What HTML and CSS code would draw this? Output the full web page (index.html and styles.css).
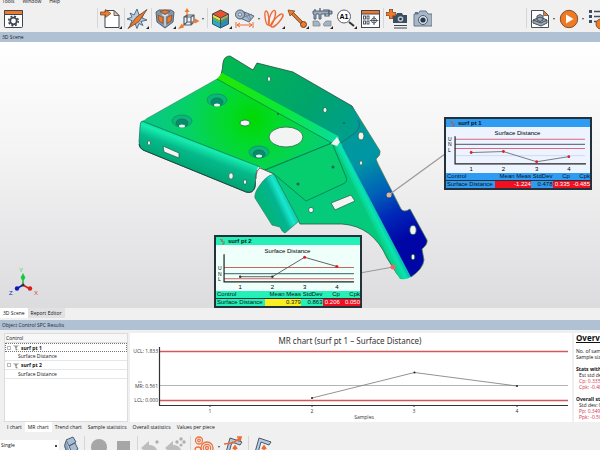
FILE: index.html
```html
<!DOCTYPE html>
<html lang="en">
  <head>
    <meta charset="UTF-8" />
    <meta name="viewport" content="width=device-width, initial-scale=1.0" />
    <title>Object Control SPC Results</title>
    <link rel="stylesheet" href="styles.css">
  </head>
  <body>
    <nav class="menu">
      <a href="#tools">Tools</a>
      <a href="#window">Window</a>
      <a href="#help">Help</a>
    </nav>

    <div class="toolbar">
      <button class="tool" aria-label="Options">
        <svg viewBox="0 0 22 22"><rect x="2.500" y="2.500" width="18" height="17" rx="1" fill="#fff" stroke="#3d4652"/><path d="M2.500 2.500h18v4h-18z" fill="#f07a2c" stroke="#3d4652"/><circle cx="11.500" cy="13" r="3.300" fill="none" stroke="#3d4652" stroke-width="1.800"/><circle cx="11.500" cy="13" r="4.800" fill="none" stroke="#3d4652" stroke-width="1.500" stroke-dasharray="2 1.770"/></svg>
      </button>
      <span class="sep first"></span>
      <button class="tool" aria-label="Import">
        <svg viewBox="0 0 22 22"><path d="M5 2.500h9l5 5v12H5z" fill="#fff" stroke="#3d4652"/><path d="M14 2.500v5h5z" fill="#f3c49c" stroke="#3d4652" stroke-width=".8"/><path d="M.5 4h5V1.500L11 5.500l-5.500 4V7h-5z" fill="#f07a2c" stroke="#66432c" stroke-width=".7"/><path d="M22 18v3h-3z" fill="#222"/></svg>
      </button>
      <span class="sep"></span>
      <button class="tool" aria-label="Align">
        <svg viewBox="0 0 22 22"><path d="M10 1l2 6 5-2-2 5 5 2-6 1.500 2 4-4-2-2 5-2-5-5 2 2-5-5-1.500 5-2-2-4 4 2z" fill="#b4cbe0" stroke="#456078" stroke-width=".9"/><path d="M20 1.500L12 13.500 1 20.500l8-11z" fill="#f07a2c" stroke="#6c4630" stroke-width=".8"/><path d="M22 18v3h-3z" fill="#222"/></svg>
      </button>
      <span class="sep"></span>
      <button class="tool" aria-label="Datum">
        <svg viewBox="0 0 22 22"><path d="M2 4l3-2h12l3 2-1 10-8 6-8-6z" fill="#8596a8" stroke="#536373"/><path d="M6 3.500l5-1.500 5 1.500-5 2.500zM4 7l5 2.500v6L5 13zM18 7l-5 2.500v6l4-2.500z" fill="#f07a2c" stroke="#754a30" stroke-width=".7"/><path d="M8 6.500l3 1.500 3-1.500M11 8v10" fill="none" stroke="#e4eaf0" stroke-width="1.200"/><path d="M22 18v3h-3z" fill="#222"/></svg>
      </button>
      <button class="tool" aria-label="Coordinate system">
        <svg viewBox="0 0 22 22"><path d="M6 9l3-2h7v7l-3 3H6zM6 9h7v8M13 9l3-2M6 17l3-3h7M9 7v7" fill="none" stroke="#53616f" stroke-width="1.200"/><path d="M9 7V3M14 14h4M6 17l-3 2" stroke="#f07a2c" stroke-width="1.300"/><path d="M6.500 4L9 0l2.500 4zM17 10.500l4.500 2.500-4.500 2.500zM4 15.500L0 21l6-1.500z" fill="#f07a2c"/></svg>
      </button>
      <span class="drop"></span>
      <span class="sep"></span>
      <button class="tool" aria-label="Color map">
        <svg viewBox="0 0 22 22"><path d="M2.500 6L10.500 2l8 4v10l-8 4-8-4z" fill="#31579f"/><path d="M2.500 6l8-4 8 4-8 4z" fill="#e9532c"/><path d="M2.500 6l8 4 8-4v3l-8 4-8-4z" fill="#f4d940"/><path d="M2.500 9l8 4 8-4v3l-8 4-8-4z" fill="#58b85a"/><path d="M2.500 12l8 4 8-4v4l-8 4-8-4z" fill="#28aad5"/><path d="M10.500 10l8-4v10l-8 4z" fill="#2855a0" opacity=".35"/><path d="M2.500 6l8-4 8 4v10l-8 4-8-4zM2.500 6l8 4 8-4M10.500 10v10" fill="none" stroke="#3d4652" stroke-width=".9"/><path d="M22 18v3h-3z" fill="#222"/></svg>
      </button>
      <button class="tool" aria-label="Dimensions">
        <svg viewBox="0 0 22 22"><path d="M8 3l12 5-5 6-9-4z" fill="#a6b8cc" stroke="#4c5c6e" stroke-width=".9"/><path d="M10 4l6 9M14 5.500l3 6M8 10l10-4" stroke="#62748a" stroke-width=".7"/><circle cx="6" cy="6.500" r="4.500" fill="#a9bacd" stroke="#4c5c6e"/><circle cx="6" cy="6.500" r="1.700" fill="#e8edf2" stroke="#4c5c6e" stroke-width=".8"/><path d="M2 14v6M19 14v6M3 17h15M6 15l-3 2 3 2M15 15l3 2-3 2" fill="none" stroke="#ef6b35"/></svg>
      </button>
      <span class="drop"></span>
      <button class="tool" aria-label="Cross sections">
        <svg viewBox="0 0 22 22"><g fill="none" stroke="#ed6a35" stroke-width="1.400"><ellipse cx="4" cy="10" rx="1.800" ry="7" transform="rotate(-8 4 10)"/><ellipse cx="9" cy="10" rx="2.500" ry="8" transform="rotate(18 9 10)"/><ellipse cx="14" cy="12.500" rx="2.500" ry="8.500" transform="rotate(42 14 12.500)"/></g><path d="M22 18v3h-3z" fill="#222"/></svg>
      </button>
      <button class="tool" aria-label="Distance">
        <svg viewBox="0 0 22 22"><path d="M4 4l13 13" stroke="#684228" stroke-width="3.200"/><path d="M4 4l13 13" stroke="#f07a2c" stroke-width="1.800"/><path d="M1 2l7 1-5 5z" fill="#f07a2c" stroke="#684228" stroke-width=".7"/><circle cx="16.500" cy="16.500" r="3" fill="#f07a2c" stroke="#684228"/><path d="M22 18v3h-3z" fill="#222"/></svg>
      </button>
      <button class="tool" aria-label="Caliper">
        <svg viewBox="0 0 22 22"><path d="M2 3h19v3H10v5H8V6H5v5H3V6H2z" fill="#9badbf" stroke="#475769" stroke-width=".9"/><path d="M4 1v2M9 0v3M12 2h6v6h-4V6" fill="none" stroke="#475769" stroke-width="1.200"/><path d="M2 13h5q3 3 2 5H2zM20 13h-5q-4 3-2 5h7z" fill="#a6b4c1" stroke="#75828e" stroke-width=".7"/><path d="M22 18v3h-3z" fill="#222"/></svg>
      </button>
      <button class="tool" aria-label="Annotation">
        <svg viewBox="0 0 22 22"><path d="M14 14l5 4" stroke="#333" stroke-width="2"/><circle cx="9" cy="8.500" r="6.500" fill="#fff" stroke="#5a6068"/><text x="4.500" y="11" class="icon-text">A1</text><path d="M22 18v3h-3z" fill="#222"/></svg>
      </button>
      <button class="tool" aria-label="Report table">
        <svg viewBox="0 0 22 22"><rect x="2.500" y="2.500" width="18" height="17" fill="#fff" stroke="#3d4652"/><path d="M2.500 2.500h18v3.500h-18z" fill="#f07a2c" stroke="#3d4652"/><g fill="none" stroke="#3d4652" stroke-width=".9"><rect x="4.500" y="8" width="2" height="3"/><rect x="8" y="8" width="2" height="3"/><rect x="4.500" y="13" width="2" height="3"/><rect x="8" y="13" width="2" height="3"/><circle cx="15" cy="12.500" r="2.500"/><path d="M15 8v9M10.800 12.500h8.500"/></g></svg>
      </button>
      <span class="sep"></span>
      <button class="tool" aria-label="Add snapshot">
        <svg viewBox="0 0 22 22"><path d="M7 7h3l1-2h5l1 2h4v8H7z" fill="#3d4d60"/><circle cx="14.500" cy="11" r="2.800" fill="#b9c8d6"/><circle cx="14.500" cy="11" r="1.300" fill="#26323e"/><path d="M8 17.500h13M8 20h13" stroke="#3d4652"/><path d="M5 1v10M0 6h10" stroke="#6c4630" stroke-width="4"/><path d="M5 1.500v9M.5 6h9" stroke="#f07a2c" stroke-width="2.800"/></svg>
      </button>
      <button class="tool" aria-label="Snapshot">
        <svg viewBox="0 0 22 22"><path d="M4 6h4l2-3h6l2 3h4v12H4z" fill="#a8b7c8" stroke="#66778a"/><circle cx="13" cy="12" r="4.500" fill="#dce4ec" stroke="#4a5b6e"/><circle cx="13" cy="12" r="2.600" fill="#26394e"/><path d="M5 5h3" stroke="#66778a" stroke-width="2"/></svg>
      </button>
      <span class="sep second"></span>
      <button class="tool" aria-label="Inspect part">
        <svg viewBox="0 0 22 22"><path d="M2.500 2.500h12l5 5v12h-17z" fill="#fff" stroke="#4a4f55"/><path d="M14.500 2.500l5 5h-5z" fill="#f07a2c" stroke="#4a4f55" stroke-width=".7"/><path d="M4 12l7-3 7 3v3l-6 3-8-3zM8 8l3-1.500L14 8v4l-3 1.500L8 12z" fill="#9aa8b6" stroke="#46515c"/><path d="M4 12l8 3 6-3" fill="none" stroke="#46515c"/></svg>
      </button>
      <span class="drop"></span>
      <button class="tool" aria-label="Play">
        <svg viewBox="0 0 22 22"><circle cx="11" cy="11" r="8.700" fill="#f07a22" stroke="#7d5132"/><path d="M8 6.500l7.500 4.500L8 15.500z" fill="#fff"/></svg>
      </button>
      <span class="drop"></span>
      <button class="tool" aria-label="Sequence">
        <svg viewBox="0 0 22 22"><path d="M2 3.500h3M2 8.500h3M2 13.500h3" stroke="#3d4d60" stroke-width="3"/><path d="M7 3.500h12M7 8.500h12M7 13.500h12" stroke="#3d4d60" stroke-width="1.500"/><circle cx="14" cy="16" r="5" fill="#f07a22" stroke="#7d5132"/></svg>
      </button>
    </div>

    <h2 class="pane-title">3D Scene</h2>

    <main class="scene">
      <svg class="model" viewBox="0 41 600 267" preserveAspectRatio="xMinYMin meet">
        <defs>
          <linearGradient id="flange" gradientUnits="userSpaceOnUse" x1="235" y1="60" x2="365" y2="150">
            <stop offset="0" stop-color="#02b853"/><stop offset=".55" stop-color="#00a46c"/><stop offset="1" stop-color="#009c9b"/>
          </linearGradient>
          <linearGradient id="bend" gradientUnits="userSpaceOnUse" x1="220" y1="75" x2="338" y2="140">
            <stop offset="0" stop-color="#24e800"/><stop offset=".5" stop-color="#0be835"/><stop offset="1" stop-color="#08dca0"/>
          </linearGradient>
          <radialGradient id="plate" gradientUnits="userSpaceOnUse" cx="252" cy="118" r="95">
            <stop offset="0" stop-color="#00d900"/><stop offset=".25" stop-color="#02da28"/><stop offset=".65" stop-color="#05d262"/><stop offset="1" stop-color="#08c981"/>
          </radialGradient>
          <linearGradient id="front" gradientUnits="userSpaceOnUse" x1="205" y1="140" x2="194" y2="170">
            <stop offset="0" stop-color="#06ce7c"/><stop offset=".2" stop-color="#16edb0"/><stop offset=".5" stop-color="#05b98a"/><stop offset="1" stop-color="#00a574"/>
          </linearGradient>
          <linearGradient id="arm" gradientUnits="userSpaceOnUse" x1="350" y1="125" x2="410" y2="235">
            <stop offset="0" stop-color="#009b96"/><stop offset=".3" stop-color="#0095a5"/><stop offset=".58" stop-color="#005fb8"/><stop offset=".78" stop-color="#0028b8"/><stop offset="1" stop-color="#0006a6"/>
          </linearGradient>
          <linearGradient id="armBend" gradientUnits="userSpaceOnUse" x1="361" y1="205" x2="377" y2="197">
            <stop offset="0" stop-color="#05ca7b"/><stop offset=".45" stop-color="#0be4b0"/><stop offset="1" stop-color="#0086b0"/>
          </linearGradient>
          <linearGradient id="foot" gradientUnits="userSpaceOnUse" x1="267" y1="208" x2="292" y2="196">
            <stop offset="0" stop-color="#02b57c"/><stop offset=".4" stop-color="#03b490"/><stop offset=".65" stop-color="#18e8cf"/><stop offset="1" stop-color="#03b98a"/>
          </linearGradient>
        </defs>

        <!-- back flange -->
        <path d="M218 79Q222 75 223 62Q224 55 230 55L253 69L257 62L293 71L352 105L364 130L344 150L336 143L218 82Z" fill="url(#flange)" stroke="#2a4a3c" stroke-width=".8"/>
        <path d="M216 79L222 72L338 135Q341 139 335 143L330 145Z" fill="url(#bend)"/>

        <!-- top plate -->
        <path d="M142 121Q143 119 146 118L217 78L332 142L300 205L260 166L142 122Z" fill="url(#plate)"/>
        <path d="M217 78L332 142L262 170" fill="none" stroke="#087747" stroke-width=".7"/>
        <path d="M146 118L217 78" stroke="#358062" stroke-width=".6"/>

        <!-- front flange -->
        <path d="M142 120L260 166Q256 169 256 176L255 186Q253 193 246 191L143 149Q139 147 139 141L140 126Q140 121 142 120Z" fill="url(#front)" stroke="#176d55" stroke-width=".7"/>
        <path d="M139 143Q139 147 143 149L246 191Q253 193 255 186L256 176Q256 168 260 167" fill="none" stroke="#23483c"/>

        <!-- lower face -->
        <path d="M273 172L332 142L342 150L406 272Q402 279 397 273L387 257Q373 225 342 223L300 223Z" fill="#05ca7b" stroke="#215c46" stroke-width=".8"/>
        <path d="M263 170L332 142L346 176Q348 181 343 183L306 200L274 173Z" fill="#06ce6f" stroke="#096b48" stroke-width=".7"/>
        <path d="M334 143L341 142L413 274Q409 279 400 278L396 272Z" fill="url(#armBend)"/>

        <!-- right arm -->
        <path d="M352 105L380 150Q381 154 376 158L378 163L401 208Q404 212 410 208L427 239Q428 243 422 248L424 259Q423 268 411 276L342 145L357 128Z" fill="url(#arm)"/>
        <path d="M352 105L380 150Q381 154 376 158L378 163L401 208Q404 212 410 208L427 239Q428 243 422 248L424 259Q423 268 411 276" fill="none" stroke="#4c7b53" stroke-width=".8"/>
        <path d="M341 142L355 132Q362 126 358 119" fill="none" stroke="#285d63" stroke-width=".7"/>

        <!-- left foot -->
        <path d="M255 197Q254 192 260 184Q267 174 274 173L299 220L285 232Q282 231 280 226L272 224Z" fill="url(#foot)" stroke="#207c62" stroke-width=".7"/>
        <path d="M258 166L274 173Q266 174 256 184Q255 172 258 166Z" fill="#f3f3f4"/>
        <path d="M260 167Q256 169 256 178M260 167L274 173" fill="none" stroke="#33453d" stroke-width=".8"/>
        <path d="M331 143L337 136L340 141L337 145Z" fill="#eef4f2"/>

        <!-- holes -->
        <g fill="#f2f3f3" stroke="#24684b" stroke-width=".8">
          <ellipse cx="286" cy="136" rx="17" ry="10"/>
          <ellipse cx="245" cy="122" rx="5" ry="3"/>
          <ellipse cx="269" cy="78" rx="1.600" ry="2.500"/>
          <ellipse cx="325" cy="109" rx="2" ry="2.500"/>
          <ellipse cx="361" cy="135" rx="3" ry="4"/>
          <ellipse cx="361" cy="162" rx="1.500" ry="2.200"/>
          <ellipse cx="149" cy="142" rx="1.600" ry="2.200"/>
          <ellipse cx="231" cy="175" rx="2.300" ry="3.200"/>
          <ellipse cx="245" cy="181" rx="1.700" ry="2.300"/>
          <ellipse cx="311" cy="209" rx="2.500" ry="2.700"/>
          <ellipse cx="413" cy="229" rx="3.200" ry="4.500"/>
          <ellipse cx="413" cy="256" rx="1.800" ry="2.800"/>
          <path d="M163 145L179 152L179 157L164 151Z"/>
          <path d="M331 202L351 194L355 200L335 209Z"/>
        </g>
        <g fill="#245f54">
          <circle cx="298" cy="183" r="1.500"/><circle cx="333" cy="166" r="1.500"/><circle cx="278" cy="113" r="1"/><circle cx="344" cy="122" r="1"/>
        </g>
        <g fill="#09b779" stroke="#17896f" stroke-width=".8">
          <ellipse cx="217" cy="99" rx="10" ry="6"/><ellipse cx="182" cy="120" rx="10" ry="6"/><ellipse cx="259" cy="151" rx="10" ry="6"/>
        </g>
        <g fill="#078e69" stroke="#0a7159" stroke-width=".7">
          <ellipse cx="217" cy="101" rx="6" ry="4"/><ellipse cx="182" cy="122" rx="6" ry="4"/><ellipse cx="259" cy="153" rx="6" ry="4"/>
        </g>
        <g fill="#eef3f1">
          <ellipse cx="217" cy="104" rx="3" ry="1.500"/><ellipse cx="182" cy="125" rx="3" ry="1.500"/><ellipse cx="259" cy="155" rx="3" ry="1.500"/>
        </g>

        <!-- leaders -->
        <path d="M390 193L445 153M360 272L393 266" stroke="#999" stroke-width="1.200"/>
        <circle cx="389" cy="194" r="2.500" fill="#e3b58c"/>
        <circle cx="393" cy="266" r="2.500" fill="#ed6868"/>
      </svg>

      <svg class="axes" viewBox="0 0 34 30">
        <path d="M15 17V7" stroke="#18b83a" stroke-width="1.500"/><path d="M15 17l-7 4" stroke="#1018b8" stroke-width="1.500"/><path d="M15 17l7 4" stroke="#d3201c" stroke-width="1.500"/>
        <path d="M12.500 10L15 5l2.500 5z" fill="#18c83a"/><circle cx="15" cy="10" r="2" fill="#18c83a"/><circle cx="9" cy="20.500" r="2.200" fill="#1018b8"/><circle cx="22" cy="20.500" r="2.200" fill="#d3201c"/><circle cx="15" cy="17" r="1.500" fill="#333"/>
        <text x="11" y="4" fill="#35d25b">Y</text><text x="1" y="27" fill="#2028c8">Z</text><text x="26" y="27" fill="#e04545">X</text>
      </svg>

      <section class="callout blue">
        <h3><svg viewBox="0 0 7 7"><path d="M1 1l3 3M3 1v3M5 3v3H3" fill="none" stroke="#b65d48"/></svg>surf pt 1</h3>
        <svg class="spark" viewBox="0 0 143 45" preserveAspectRatio="none">
          <text x="71" y="8" text-anchor="middle">Surface Distance</text>
          <text x="2" y="14" class="tick">U</text><text x="2" y="19" class="tick">N</text><text x="2" y="24" class="tick">L</text>
          <path d="M9 12H138M9 21H138" stroke="#d9687c"/><path d="M9 17H138" stroke="#6b7583"/><path d="M9 28H138" stroke="#c5d2e4" stroke-width=".7"/>
          <path d="M9 9V36H139" fill="none" stroke="#222" stroke-width="1.200"/>
          <path d="M25 25L57 24L90 34L122 29" fill="none" stroke="#68717d" stroke-width=".9"/>
          <g fill="#dc2032"><circle cx="25" cy="25" r="1.400"/><circle cx="57" cy="24" r="1.400"/><circle cx="90" cy="34" r="1.400"/><circle cx="122" cy="29" r="1.400"/></g>
          <g text-anchor="middle"><text x="25" y="43">1</text><text x="57" y="43">2</text><text x="90" y="43">3</text><text x="122" y="43">4</text></g>
        </svg>
        <table>
          <tr><th class="name">Control</th><th class="mean">Mean Meas</th><th class="dev">StdDev</th><th class="cp">Cp</th><th>Cpk</th></tr>
          <tr><td class="name">Surface Distance</td><td class="bad">-1.224</td><td>0.478</td><td class="bad">0.335</td><td class="bad">-0.485</td></tr>
        </table>
      </section>

      <section class="callout green">
        <h3><svg viewBox="0 0 7 7"><path d="M1 1l3 3M3 1v3M5 3v3H3" fill="none" stroke="#b65d48"/></svg>surf pt 2</h3>
        <svg class="spark" viewBox="0 0 143 45" preserveAspectRatio="none">
          <text x="71" y="8" text-anchor="middle">Surface Distance</text>
          <text x="2" y="24" class="tick">U</text><text x="2" y="30" class="tick">N</text><text x="2" y="35" class="tick">L</text>
          <path d="M8 22H137M8 33H137" stroke="#c96464"/><path d="M8 28H137" stroke="#5c7f83"/>
          <path d="M8 9V36H137" fill="none" stroke="#222" stroke-width="1.200"/>
          <path d="M24 31L56 31L88 12L120 21" fill="none" stroke="#555" stroke-width=".9"/>
          <g fill="#333"><circle cx="24" cy="31" r="1.200"/><circle cx="56" cy="31" r="1.200"/></g>
          <g fill="#e01c1c"><circle cx="88" cy="12" r="1.500"/><circle cx="120" cy="21" r="1.500"/></g>
          <g text-anchor="middle"><text x="24" y="43">1</text><text x="56" y="43">2</text><text x="88" y="43">3</text><text x="120" y="43">4</text></g>
        </svg>
        <table>
          <tr><th class="name">Control</th><th class="mean">Mean Meas</th><th class="dev">StdDev</th><th class="cp">Cp</th><th>Cpk</th></tr>
          <tr><td class="name">Surface Distance</td><td class="warn">0.379</td><td>0.863</td><td class="bad">0.206</td><td class="bad">0.050</td></tr>
        </table>
      </section>
    </main>

    <div class="tabs scene-tabs">
      <button class="active">3D Scene</button>
      <button>Report Editor</button>
    </div>

    <h2 class="pane-title">Object Control SPC Results</h2>

    <div class="results">
      <div class="tree">
        <div class="tree-head">Control</div>
        <ul>
          <li class="selected"><span class="toggle"></span><svg viewBox="0 0 8 8"><path d="M1 1l3 3 3-3M4 1v6M4 7h2" fill="none" stroke="#555"/></svg><b>surf pt 1</b></li>
          <li class="child">Surface Distance</li>
          <li><span class="toggle"></span><svg viewBox="0 0 8 8"><path d="M1 1l3 3 3-3M4 1v6M4 7h2" fill="none" stroke="#555"/></svg><b>surf pt 2</b></li>
          <li class="child">Surface Distance</li>
        </ul>
      </div>

      <div class="chart">
        <svg viewBox="130 333 442 89" preserveAspectRatio="xMinYMin meet">
          <text x="350" y="344" text-anchor="middle" class="title">MR chart (surf pt 1 – Surface Distance)</text>
          <path d="M159 351.500H568M159 400.500H568" stroke="#d05a5a" stroke-width="1.400"/>
          <path d="M159 385.500H568" stroke="#b4b4b4"/>
          <path d="M159.500 347V405.500H568" fill="none" stroke="#333" stroke-width="1.200"/>
          <path d="M210 405v2M312 405v2M414 405v2M517 405v2" stroke="#333"/>
          <path d="M312 398L414.500 372.500L517 386" fill="none" stroke="#777" stroke-width=".8"/>
          <g fill="#222"><circle cx="312" cy="398" r="1"/><circle cx="414.500" cy="372.500" r="1"/><circle cx="517" cy="386" r="1"/></g>
          <g text-anchor="end"><text x="158" y="353">UCL: 1.833</text><text x="158" y="388">MR: 0.561</text><text x="158" y="402">LCL: 0.000</text></g>
          <path d="M138 382h4" stroke="#555" stroke-width=".6"/>
          <g text-anchor="middle"><text x="210" y="413">1</text><text x="312" y="413">2</text><text x="414" y="413">3</text><text x="517" y="413">4</text><text x="364" y="419">Samples</text></g>
        </svg>
      </div>

      <aside class="overview">
        <h3>Overview</h3>
        <p>No. of samples</p>
        <p>Sample size</p>
        <h4>Stats within</h4>
        <p class="in">Est std dev</p>
        <p class="in low">Cp: 0.335</p>
        <p class="in low">Cpk: -0.485</p>
        <h4>Overall stats</h4>
        <p class="in">Std dev: 0</p>
        <p class="in low">Pp: 0.349</p>
        <p class="in low">Ppk: -0.50</p>
      </aside>
    </div>

    <div class="tabs chart-tabs">
      <button>I chart</button>
      <button class="active">MR chart</button>
      <button>Trend chart</button>
      <button>Sample statistics</button>
      <button>Overall statistics</button>
      <button>Values per piece</button>
    </div>

    <div class="toolbar bottom">
      <select aria-label="Mode">
        <option>Single</option>
      </select>
      <button class="tool probe" aria-label="Probe">
        <svg viewBox="0 0 22 22"><path d="M7 4l7-3 3 5-7 4zM10 10l6-3 3 6-6 4z" fill="#a9bdd2" stroke="#4b617a"/><path d="M7 5q-3 5 0 9l5 4M4 17h16v4H4z" fill="#8da4bc" stroke="#4b617a"/></svg>
      </button>
      <span class="sep"></span>
      <button class="tool" aria-label="Record"><svg viewBox="0 0 22 22"><circle cx="11" cy="11" r="8" fill="#a6a6a6"/></svg></button>
      <button class="tool" aria-label="Stop"><svg viewBox="0 0 22 22"><path d="M5 5h13v13H5z" fill="#a6a6a6"/></svg></button>
      <span class="sep"></span>
      <button class="tool" aria-label="Undo point"><svg viewBox="0 0 22 22"><path d="M0 12l8-7v4q9 0 9 11-3-5-9-5v4z" fill="#bdbdbd"/><circle cx="16" cy="6" r="1.700" fill="#b0b0b0"/></svg></button>
      <button class="tool" aria-label="Undo all"><svg viewBox="0 0 22 22"><path d="M0 12l8-7v4q9 0 9 11-3-5-9-5v4z" fill="#bdbdbd"/><g fill="#b0b0b0"><circle cx="12" cy="6" r="1.700"/><circle cx="16" cy="3" r="1.700"/><circle cx="19" cy="6" r="1.700"/><circle cx="16" cy="9" r="1.500"/></g></svg></button>
      <span class="sep"></span>
      <button class="tool" aria-label="Targets"><svg viewBox="0 0 22 22"><g fill="none" stroke="#ec7440" stroke-width="1.300"><circle cx="5" cy="4.500" r="3.500"/><circle cx="5" cy="4.500" r="1.300"/><circle cx="4" cy="14" r="3"/><circle cx="13" cy="12" r="6"/><circle cx="13" cy="12" r="3.700"/><circle cx="13" cy="12" r="1.500"/></g></svg></button>
      <span class="drop"></span>
      <button class="tool" aria-label="Move device"><svg viewBox="0 0 22 22"><path d="M2 20L7 2l12 4-2 3L9 6 5 20z" fill="#b9cbdc" stroke="#46586c"/><path d="M1 8l9-1 7-5M14 1l4 0-1 4M12 11v9M10 13l2-3 2 3" fill="none" stroke="#ec6b30" stroke-width="1.700"/></svg></button>
      <span class="sep"></span>
      <button class="tool" aria-label="Device"><svg viewBox="0 0 22 22"><path d="M2 20L7 2l12 4-2 3L9 6 5 20z" fill="#b9cbdc" stroke="#46586c"/><path d="M12 11v9M10 13l2-3 2 3" fill="none" stroke="#ec6b30" stroke-width="1.700"/></svg></button>
    </div>
  </body>
</html>
```

FILE: styles.css
```css
* {
  box-sizing: border-box;
}

body {
  margin: 0;
  height: 100vh;
  display: flex;
  flex-direction: column;
  overflow: hidden;
  background: #f0f0f1;
  color: #111;
  font-family: "Open Sans", "Noto Sans", sans-serif;
  font-size: 5px;
}

h2, h3, h4, p, ul {
  margin: 0;
  padding: 0;
}

button {
  padding: 0;
  border: none;
  background: none;
  color: inherit;
  font: inherit;
}

/* menu and toolbars */
.menu {
  flex: none;
  height: 4px;
  padding-left: 2px;
  display: flex;
  align-items: flex-end;
  gap: 8px;
  overflow: hidden;
}

.menu a {
  color: #111;
  line-height: 6px;
  text-decoration: none;
}

.toolbar {
  flex: none;
  height: 28px;
  padding: 4px 0 0 2px;
  display: flex;
  align-items: flex-start;
  overflow: hidden;
}

.tool {
  flex: none;
  width: 22px;
  height: 22px;
}

.tool + .tool,
.drop + .tool {
  margin-left: 2px;
}

.tool svg {
  display: block;
  width: 22px;
  height: 22px;
}

.icon-text {
  font: bold 7px "Liberation Sans", sans-serif;
}

.sep {
  flex: none;
  width: 1px;
  height: 20px;
  margin: 0 2px;
  background: #d6d6d8;
}

.sep.first {
  margin-left: 73px;
}

.sep.second {
  margin-left: 94px;
}

.drop {
  flex: none;
  width: 5px;
  height: 22px;
  display: flex;
  align-items: center;
  justify-content: center;
}

.drop::before {
  content: "";
  border: 1px solid transparent;
  border-top: 2px solid #444;
}

.pane-title {
  flex: none;
  height: 10px;
  padding-left: 2px;
  background: #b0c1d3;
  color: #1c2632;
  font-size: 5px;
  font-weight: normal;
  line-height: 10px;
}

/* 3D view */
.scene {
  flex: 1;
  min-height: 0;
  position: relative;
  overflow: hidden;
  background: linear-gradient(#fff, #f4f4f5 40%, #dcdcde);
}

.model {
  display: block;
  width: 100%;
}

.axes {
  position: absolute;
  left: 8px;
  bottom: 10px;
  width: 34px;
  height: 30px;
  overflow: visible;
  font: 6px "Liberation Sans", sans-serif;
}

.callout {
  position: absolute;
  width: 148px;
  border: 2px solid #24313a;
  color: #111;
  font-family: "Liberation Sans", sans-serif;
}

.callout h3 {
  height: 8px;
  padding-left: 3px;
  display: flex;
  align-items: center;
  gap: 2px;
  font-size: 6px;
}

.callout h3 svg {
  width: 7px;
  height: 7px;
}

.spark {
  display: block;
  width: 100%;
  height: 46px;
  font-size: 6px;
}

.spark .tick {
  font-size: 5px;
}

.callout table {
  width: 100%;
  table-layout: fixed;
  border-collapse: collapse;
  font-size: 6px;
  line-height: 7px;
}

.callout th,
.callout td {
  padding: 0;
  font-weight: normal;
  text-align: right;
  white-space: nowrap;
}

.callout th {
  border-bottom: 1px solid #24313a;
}

.callout .name {
  width: 34%;
  padding-left: 1px;
  text-align: left;
}

.mean {
  width: 25%;
}

.dev {
  width: 15%;
}

.cp {
  width: 12%;
}

.callout .bad {
  background: #f01020;
  color: #fff;
}

.callout .warn {
  background: #f8f020;
}

.blue {
  left: 444px;
  top: 75px;
  background: #2d9cf2;
}

.blue .spark {
  background: #edf4ff;
}

.green {
  left: 214px;
  top: 193px;
  background: #24f0b8;
}

.green .spark {
  background: #effffa;
}

/* tabs */
.tabs {
  flex: none;
  display: flex;
  line-height: 10px;
}

.tabs button {
  height: 10px;
  padding: 0 3px;
  white-space: nowrap;
}

.tabs .active {
  background: #fff;
}

.scene-tabs {
  height: 12px;
}

.scene-tabs button {
  background: #e1e1e3;
}

.chart-tabs {
  padding-left: 4px;
}

/* results */
.results {
  flex: none;
  height: 92px;
  padding: 3px 0 0 4px;
  display: flex;
  gap: 2px;
}

.tree {
  flex: none;
  width: 124px;
  background: #fff;
  border: 1px solid #dcdcde;
}

.tree-head {
  height: 9px;
  padding-left: 1px;
  background: #f7f7f8;
  border-bottom: 1px solid #dcdcde;
  line-height: 8px;
}

.tree ul {
  list-style: none;
}

.tree li {
  height: 9px;
  padding-left: 2px;
  display: flex;
  align-items: center;
  gap: 2px;
  border-bottom: 1px solid #e6e6e8;
  line-height: 8px;
}

.tree li.selected {
  padding-left: 1px;
  border: 1px dotted #777;
}

.tree li.child {
  padding-left: 13px;
}

.tree svg {
  width: 6px;
  height: 7px;
}

.toggle {
  width: 4px;
  height: 4px;
  border: 1px solid #b8b8b8;
}

.chart {
  flex: 1;
  min-width: 0;
  background: #fff;
}

.chart svg {
  display: block;
  width: 100%;
  fill: #333;
}

.chart .title {
  font-family: "Noto Sans", sans-serif;
  font-size: 8px;
}

.overview {
  flex: none;
  width: 26px;
  padding-left: 2px;
  overflow: hidden;
  background: #fff;
  line-height: 6px;
  white-space: nowrap;
}

.overview h3 {
  margin-bottom: 5px;
  font-size: 8px;
  line-height: 10px;
  text-decoration: underline;
}

.overview h4 {
  margin-top: 6px;
  font-size: 5px;
}

.overview .in {
  padding-left: 3px;
}

.overview .low {
  color: #d8304c;
}

/* bottom bar */
.bottom {
  height: 18px;
  padding: 4px 0 0;
}

.bottom select {
  flex: none;
  appearance: none;
  width: 59px;
  height: 14px;
  margin-top: 4px;
  padding: 0 0 4px 1px;
  border: none;
  background: linear-gradient(#444, #444) 55px 5px / 2px 2px no-repeat #fff;
  color: #111;
  font: inherit;
}

.bottom .sep {
  margin: 0 3px;
}
```
